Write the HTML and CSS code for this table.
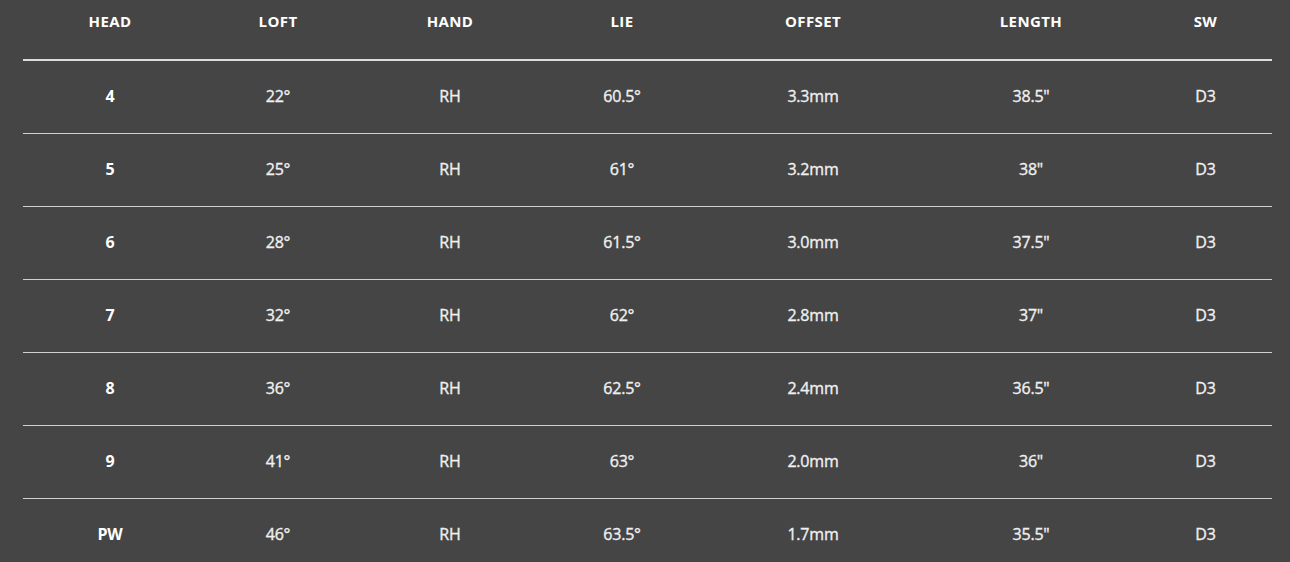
FILE: index.html
```html
<!DOCTYPE html>
<html>
<head>
<meta charset="utf-8">
<link rel="stylesheet" href="styles.css">
</head>
<body>
<div class="page">
  <div class="specs">
    <div class="row head">
      <div>HEAD</div><div>LOFT</div><div>HAND</div><div>LIE</div><div>OFFSET</div><div>LENGTH</div><div>SW</div>
    </div>
    <div class="row"><div class="b">4</div><div>22°</div><div>RH</div><div>60.5°</div><div>3.3mm</div><div>38.5"</div><div>D3</div></div>
    <div class="row"><div class="b">5</div><div>25°</div><div>RH</div><div>61°</div><div>3.2mm</div><div>38"</div><div>D3</div></div>
    <div class="row"><div class="b">6</div><div>28°</div><div>RH</div><div>61.5°</div><div>3.0mm</div><div>37.5"</div><div>D3</div></div>
    <div class="row"><div class="b">7</div><div>32°</div><div>RH</div><div>62°</div><div>2.8mm</div><div>37"</div><div>D3</div></div>
    <div class="row"><div class="b">8</div><div>36°</div><div>RH</div><div>62.5°</div><div>2.4mm</div><div>36.5"</div><div>D3</div></div>
    <div class="row"><div class="b">9</div><div>41°</div><div>RH</div><div>63°</div><div>2.0mm</div><div>36"</div><div>D3</div></div>
    <div class="row last"><div class="b">PW</div><div>46°</div><div>RH</div><div>63.5°</div><div>1.7mm</div><div>35.5"</div><div>D3</div></div>
  </div>
</div>
</body>
</html>
```

FILE: styles.css
```css
html, body {
  margin: 0;
  padding: 0;
  background: #454545;
}
.page {
  padding: 0 18px 0 23px;
  font-family: "Open Sans", "Liberation Sans", sans-serif;
  color: #f0f0f0;
  font-size: 16px;
}
.specs {
  display: flex;
  flex-direction: column;
}
.row {
  display: grid;
  grid-template-columns: 174px 162px 182px 162px 220px 216px 133px;
  height: 72px;
  align-items: center;
  text-align: center;
  border-bottom: 1px solid #d0d0d0;
  font-weight: 400;
  letter-spacing: -0.2px;
  -webkit-text-stroke: 0.35px currentColor;
}
.row > div {
  line-height: 20px;
  padding-bottom: 3px;
}
.row.head {
  height: 59px;
  align-items: start;
  border-bottom: 2px solid #dcdcdc;
  font-weight: 700;
  font-size: 15px;
  color: #ffffff;
  letter-spacing: 0.4px;
  -webkit-text-stroke: 0;
}
.row.head > div {
  padding-top: 11px;
  padding-bottom: 0;
}
.row.last {
  border-bottom: none;
}
.b {
  font-weight: 700;
  color: #ffffff;
  -webkit-text-stroke: 0;
}
```
